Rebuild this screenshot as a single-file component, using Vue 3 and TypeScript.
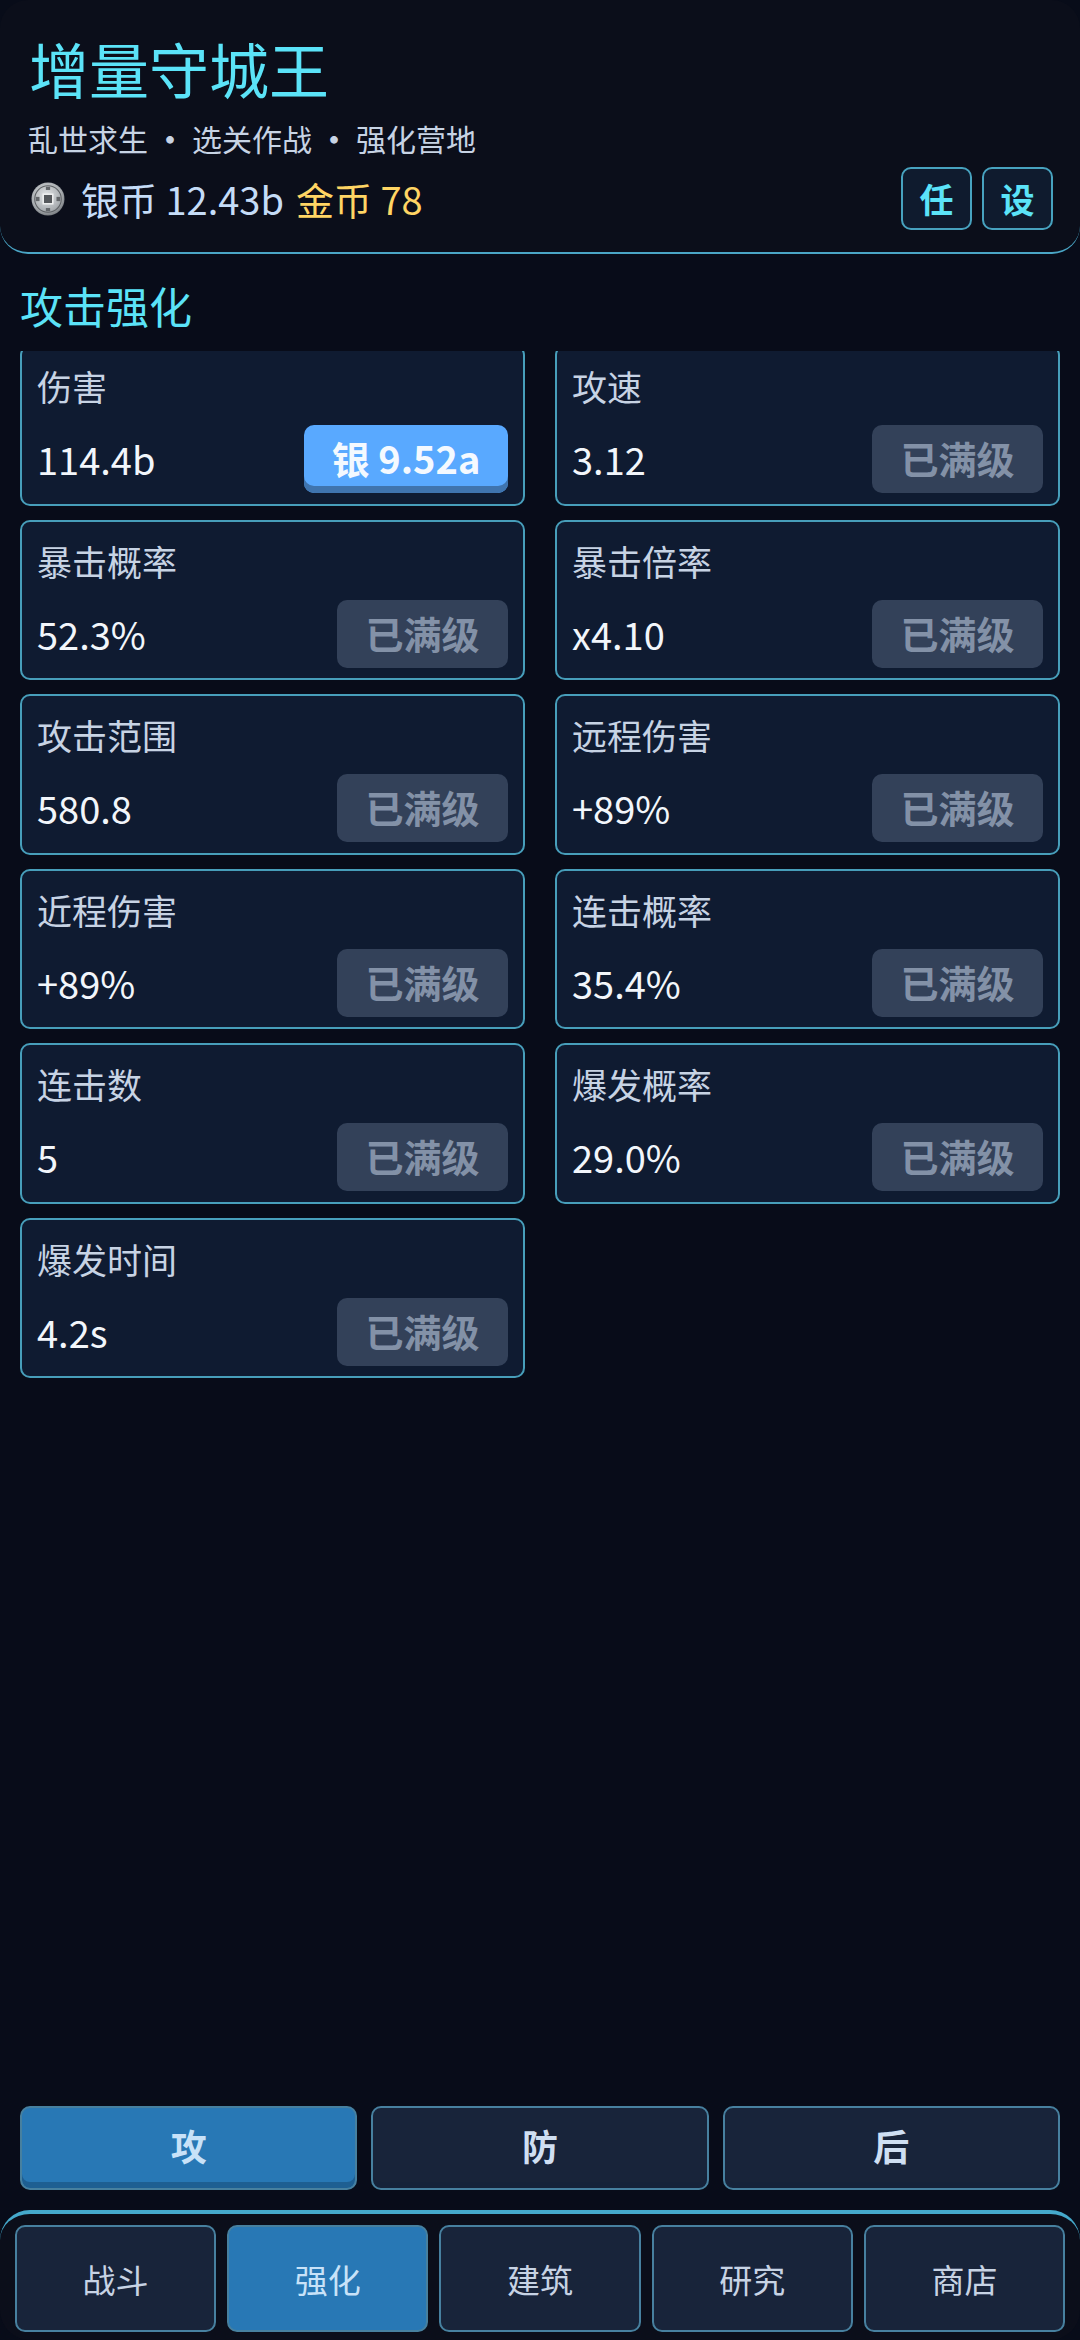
<script setup lang="ts">
import { ref } from 'vue'

interface Upgrade {
  name: string
  value: string
  cost?: string
}

const upgrades: Upgrade[] = [
  { name: '伤害', value: '114.4b', cost: '银 9.52a' },
  { name: '攻速', value: '3.12' },
  { name: '暴击概率', value: '52.3%' },
  { name: '暴击倍率', value: 'x4.10' },
  { name: '攻击范围', value: '580.8' },
  { name: '远程伤害', value: '+89%' },
  { name: '近程伤害', value: '+89%' },
  { name: '连击概率', value: '35.4%' },
  { name: '连击数', value: '5' },
  { name: '爆发概率', value: '29.0%' },
  { name: '爆发时间', value: '4.2s' }
]

const subTabs = ['攻', '防', '后']
const navTabs = ['战斗', '强化', '建筑', '研究', '商店']

const activeSub = ref('攻')
const activeNav = ref('强化')
</script>

<template>
  <div class="page">
    <header class="top">
      <h1 class="title">增量守城王</h1>
      <div class="subtitle">乱世求生<span class="dot">·</span>选关作战<span class="dot">·</span>强化营地</div>
      <div class="res-row">
        <svg class="coin" viewBox="0 0 32 32" width="34" height="34">
          <defs>
            <radialGradient id="coinFill" cx="45%" cy="40%" r="65%">
              <stop offset="0%" stop-color="#e4e6e8" />
              <stop offset="70%" stop-color="#a9adb1" />
              <stop offset="100%" stop-color="#6d7074" />
            </radialGradient>
          </defs>
          <circle cx="16" cy="16" r="15.5" fill="url(#coinFill)" />
          <circle cx="16" cy="16" r="12.5" fill="none" stroke="#5d6064" stroke-width="1" />
          <rect x="11.5" y="11.5" width="9" height="9" fill="#55585c" stroke="#f0f1f2" stroke-width="1.4" />
          <rect x="14" y="4.5" width="4" height="3" fill="#63666a" />
          <rect x="14" y="24.5" width="4" height="3" fill="#63666a" />
          <rect x="4.5" y="14" width="3.5" height="4" fill="#63666a" />
          <rect x="24" y="14" width="3.5" height="4" fill="#63666a" />
        </svg>
        <span class="silver">银币 12.43b</span>
        <span class="gold">金币 78</span>
        <div class="top-btns">
          <button class="icon-btn">任</button>
          <button class="icon-btn">设</button>
        </div>
      </div>
    </header>

    <h2 class="section-title">攻击强化</h2>

    <div class="scroll">
      <div class="grid">
        <div v-for="item in upgrades" :key="item.name" class="card">
          <div class="card-name">{{ item.name }}</div>
          <div class="card-row">
            <span class="card-value">{{ item.value }}</span>
            <button v-if="item.cost" class="buy">{{ item.cost }}</button>
            <button v-else class="maxed">已满级</button>
          </div>
        </div>
      </div>
    </div>

    <div class="sub-tabs">
      <button
        v-for="tab in subTabs"
        :key="tab"
        class="sub-tab"
        :class="{ active: tab === activeSub }"
        @click="activeSub = tab"
      >
        {{ tab }}
      </button>
    </div>

    <nav class="nav">
      <button
        v-for="tab in navTabs"
        :key="tab"
        class="nav-tab"
        :class="{ active: tab === activeNav }"
        @click="activeNav = tab"
      >
        {{ tab }}
      </button>
    </nav>
  </div>
</template>

<style>
html,
body {
  margin: 0;
  background: #080c19;
}
</style>

<style scoped>
.page {
  width: 1080px;
  height: 2340px;
  display: flex;
  flex-direction: column;
  box-sizing: border-box;
  overflow: hidden;
  background: #080c19;
  font-family: "Noto Sans CJK SC", "Noto Sans", sans-serif;
}

button {
  font-family: inherit;
  padding: 0;
  cursor: pointer;
}

.top {
  height: 254px;
  box-sizing: border-box;
  padding: 33px 28px 0;
  background: #0b0e1a;
  border-bottom: 2px solid #4aa6c6;
  border-radius: 28px;
  flex-shrink: 0;
}

.title {
  margin: 0;
  font-size: 60px;
  line-height: 70px;
  font-weight: 400;
  color: #5be3f8;
  padding-left: 1px;
}

.subtitle {
  margin-top: 15px;
  font-size: 30px;
  line-height: 40px;
  color: #c7d3e4;
}

.dot {
  display: inline-block;
  width: 44px;
  text-align: center;
  font-weight: 700;
}

.res-row {
  display: flex;
  align-items: center;
  margin-top: 9px;
  font-size: 38px;
  line-height: 62px;
}

.coin {
  margin: 0 16px 0 3px;
}

.silver {
  color: #c5dcf7;
}

.gold {
  margin-left: 12px;
  color: #ffd564;
}

.top-btns {
  margin-left: auto;
  margin-right: -1px;
  display: flex;
  gap: 10px;
}

.icon-btn {
  width: 71px;
  height: 63px;
  box-sizing: border-box;
  background: #0f1b2e;
  border: 2px solid #47a2bf;
  border-radius: 10px;
  color: #5be3f8;
  font-size: 34px;
  font-weight: 700;
}

.section-title {
  margin: 0;
  height: 97px;
  padding-left: 20px;
  font-size: 43px;
  line-height: 102px;
  font-weight: 400;
  color: #5be3f8;
  flex-shrink: 0;
}

.scroll {
  flex: 1;
  min-height: 0;
  overflow: hidden;
  padding: 0 20px;
}

.grid {
  margin-top: -6px;
  display: grid;
  grid-template-columns: 505px 505px;
  column-gap: 30px;
  row-gap: 14px;
}

.card {
  height: 160.5px;
  box-sizing: border-box;
  padding: 14px 15px 0;
  background: #0f1b31;
  border: 2px solid #479eba;
  border-radius: 10px;
}

.card-name {
  font-size: 35px;
  line-height: 50px;
  color: #c7d3e4;
}

.card-row {
  margin-top: 14px;
  display: flex;
  align-items: center;
  justify-content: space-between;
}

.card-value {
  font-size: 38px;
  line-height: 68px;
  color: #f2f6fb;
}

.maxed,
.buy {
  height: 68px;
  padding-bottom: 3px;
  border: none;
  border-radius: 10px;
  font-size: 38px;
  font-weight: 700;
}

.maxed {
  width: 171px;
  background: #334159;
  color: #8391a7;
}

.buy {
  width: 204px;
  background: #59a9ff;
  color: #f4f9ff;
  box-shadow: inset 0 -7px 0 #3f74ae;
}

.sub-tabs {
  display: flex;
  gap: 14px;
  padding: 0 20px;
  flex-shrink: 0;
}

.sub-tab {
  flex: 1;
  height: 84px;
  padding-bottom: 6px;
  background: #18243a;
  border: 2px solid #47809f;
  border-radius: 10px;
  box-shadow: inset 0 -6px 0 #16233a;
  color: #cfdff2;
  font-size: 36px;
  font-weight: 700;
}

.sub-tab.active {
  background: #2878b5;
  color: #c8e2f8;
  box-shadow: inset 0 -6px 0 #1e5f92;
}

.nav {
  margin-top: 20px;
  height: 130px;
  box-sizing: border-box;
  display: flex;
  gap: 11px;
  padding: 11px 15px 8px;
  background: #0b0e1a;
  border-top: 4px solid #45a9cb;
  border-radius: 30px;
  flex-shrink: 0;
}

.nav-tab {
  flex: 1;
  background: #18243a;
  border: 2px solid #47809f;
  border-radius: 10px;
  color: #c7d3e4;
  font-size: 33px;
}

.nav-tab.active {
  background: #2878b5;
  color: #c8e2f8;
}
</style>
